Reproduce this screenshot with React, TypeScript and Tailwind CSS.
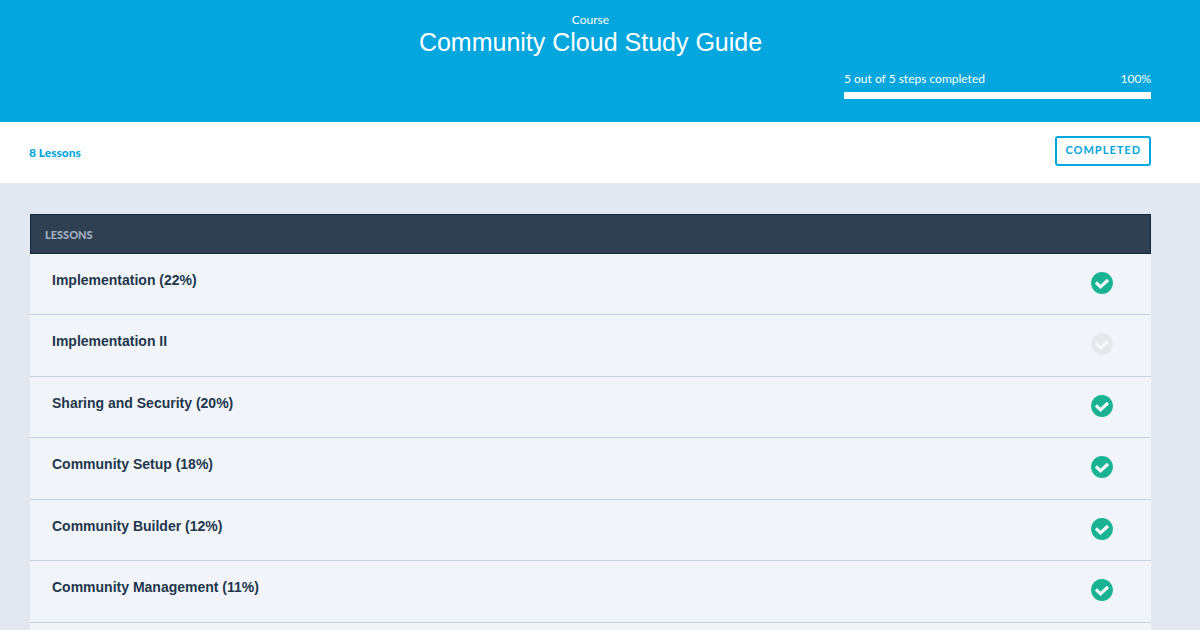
interface Lesson {
  title: string;
  completed: boolean;
}

const lessons: Lesson[] = [
  { title: 'Implementation (22%)', completed: true },
  { title: 'Implementation II', completed: false },
  { title: 'Sharing and Security (20%)', completed: true },
  { title: 'Community Setup (18%)', completed: true },
  { title: 'Community Builder (12%)', completed: true },
  { title: 'Community Management (11%)', completed: true },
];

function StatusIcon({ completed }: { completed: boolean }) {
  return (
    <svg
      viewBox="0 0 22 22"
      role="img"
      aria-label={completed ? 'Completed' : 'Not completed'}
      className={`h-[22px] w-[22px] shrink-0 ${completed ? 'text-[#19b394]' : 'text-[#e5e7eb]'}`}
    >
      <circle cx="11" cy="11" r="10.9" fill="currentColor" />
      <path
        d="M4.9 10.4 L9.5 14.9 L17 8"
        fill="none"
        stroke="#f7fafc"
        strokeWidth="3.1"
        strokeLinecap="butt"
        strokeLinejoin="miter"
      />
    </svg>
  );
}

function CourseHeader() {
  return (
    <header className="bg-[#04a6de] pt-3 pr-[49px] pb-[23px] pl-[30px] text-white">
      <div className="text-center">
        <p className="text-[12px] leading-4">Course</p>
        <h1 className="font-['Liberation_Sans',sans-serif] text-[25px] leading-7">
          Community Cloud Study Guide
        </h1>
      </div>

      <div className="mt-[15px] ml-auto w-[307px]">
        <div className="flex justify-between text-[12px] leading-4">
          <span id="steps">5 out of 5 steps completed</span>
          <span>100%</span>
        </div>
        <div
          role="progressbar"
          aria-labelledby="steps"
          aria-valuenow={100}
          aria-valuemin={0}
          aria-valuemax={100}
          className="mt-[5px] h-[7px]"
        >
          <div className="h-full bg-white" style={{ width: '100%' }} />
        </div>
      </div>
    </header>
  );
}

export default function App() {
  return (
    <div className="flex min-h-screen flex-col bg-[#e2e7f0] font-[Lato,sans-serif]">
      <CourseHeader />

      <div className="flex items-start justify-between bg-white pt-[14px] pr-[49px] pb-[17px] pl-[29px] text-[#04a6de]">
        <p className="pt-[9px] text-[12px] leading-4 font-black">8 Lessons</p>
        <button
          type="button"
          className="h-[30px] rounded-[3px] border-2 border-[#04a6de] px-2 pb-[2px] text-[11px] leading-4 font-bold tracking-[1px]"
        >
          COMPLETED
        </button>
      </div>

      <main className="flex flex-1 flex-col pt-[31px] pr-[49px] pl-[30px]">
        <h2 className="h-10 border border-[#12293d] bg-[#2f4053] px-[14px] pt-3 text-[11px] leading-4 font-black text-[#a3afbf]">
          LESSONS
        </h2>
        <ul className="flex-1 bg-[#f1f5fa] font-['Liberation_Sans',sans-serif]">
          {lessons.map((lesson) => (
            <li
              key={lesson.title}
              className="flex h-[61px] items-start justify-between border-b border-[#c3d3e5] pt-[18px] pr-[38px] pl-[22px] even:h-[62px]"
            >
              <a href="#" className="text-[14px] leading-4 font-bold text-[#22364b]">
                {lesson.title}
              </a>
              <StatusIcon completed={lesson.completed} />
            </li>
          ))}
        </ul>
      </main>
    </div>
  );
}
